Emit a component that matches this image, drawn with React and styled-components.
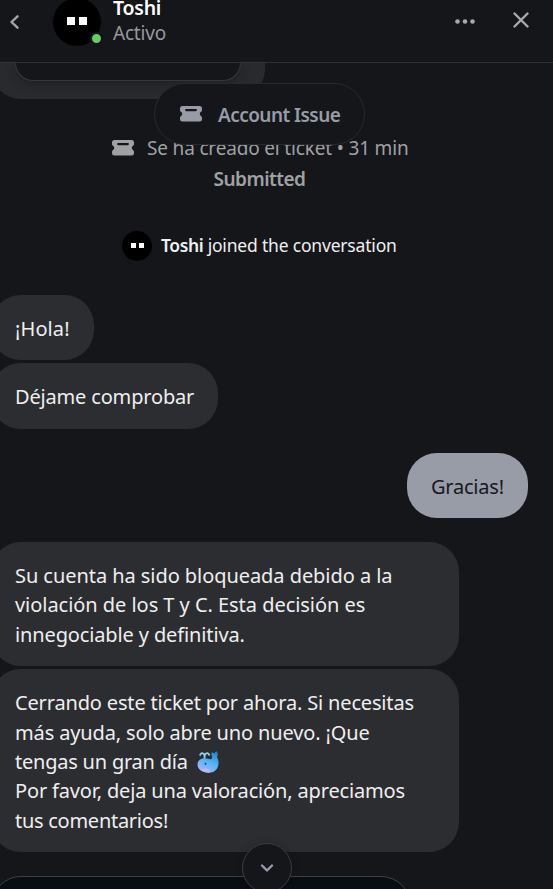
import React from 'react';
import styled, { createGlobalStyle } from 'styled-components';

const received = [
  { width: 103, lines: [['¡Hola!', 0.1]] },
  { width: 227, lines: [['Déjame comprobar', -0.17]] },
];

const closing = [
  {
    width: 468,
    lines: [
      ['Su cuenta ha sido bloqueada debido a la', -0.06],
      ['violación de los T y C. Esta decisión es', -0.04],
      ['innegociable y definitiva.', -0.13],
    ],
  },
  {
    width: 468,
    lines: [
      ['Cerrando este ticket por ahora. Si necesitas', -0.16],
      ['más ayuda, solo abre uno nuevo. ¡Que', -0.14],
      ['tengas un gran día', -0.22, 'whale'],
      ['Por favor, deja una valoración, apreciamos', -0.155],
      ['tus comentarios!', -0.27],
    ],
  },
];

const TicketIcon = () => (
  <svg width='22' height='16' viewBox='0 0 22 16'>
    <path
      fill='currentColor'
      fillRule='evenodd'
      d='M2.500 0h17A2.500 2.500 0 0 1 22 2.500V4c0 1-.6 1.600-1.300 2.100-.6.400-.9 1-.9 1.800s.3 1.500.9 1.900c.7.500 1.300 1.200 1.300 2.100v1.300a2.400 2.400 0 0 1-2.500 2.400h-17A2.400 2.400 0 0 1 0 13.200v-1.300c0-.9.600-1.600 1.300-2.100.6-.4.9-1.100.9-1.900s-.3-1.400-.9-1.800C.6 5.600 0 5 0 4V2.500A2.500 2.500 0 0 1 2.500 0zM6.200 2.900a1.150 1.150 0 0 0 0 2.300h9.600a1.150 1.150 0 0 0 0-2.300z'
    />
  </svg>
);

const Whale = () => (
  <svg width='22' height='22' viewBox='0 0 22 22'>
    <defs>
      <linearGradient id='whale-body' x1='0.8' y1='0' x2='0.3' y2='1'>
        <stop offset='0' stopColor='#1f86d2' />
        <stop offset='0.5' stopColor='#55b5f5' />
        <stop offset='1' stopColor='#a9b4f6' />
      </linearGradient>
    </defs>
    <path
      d='M.5 13.500C.5 9.600 3.500 7.200 7.600 7.200c2.600 0 4 1 5.700 1 1.500 0 2-1.100 2-2.400-1-1.300-1.100-3-.4-4.500 1.200.1 2 .7 2.500 1.500.3-1.200 1-2.100 2.200-2.600 1.300 1.700 1.500 3.800.4 5.700 1.500 2.700 2.100 6.200 1 9.400-1.200 4-4.500 6.400-9 6.400-6.500 0-11.500-3.200-11.500-8.200z'
      fill='url(#whale-body)'
    />
    <path d='M3 17.500c2.500.8 4.500.3 6.500-.5 3 .8 4 2.600 3.500 4.600-4 .5-8-1-10-4.100z' fill='#c9b6f3' opacity='0.75' />
    <path d='M7.600 6.500V4.800M7 3.500C6 1.500 4.300 1.700 3.200 3.800M8.200 3.500c1-1.900 2.800-1.800 4 .2' fill='none' stroke='#8ed0ef' strokeWidth='1.900' strokeLinecap='round' />
    <circle cx='8.500' cy='12.800' r='1' fill='#17476f' />
  </svg>
);

const Bubbles = ({ items }) =>
  items.map((item) => (
    <Bubble key={item.lines[0][0]} $width={item.width}>
      {item.lines.map(([text, spacing, emoji]) => (
        <Line key={text} $spacing={spacing}>
          <span>{text}</span>
          {emoji && <Whale />}
        </Line>
      ))}
    </Bubble>
  ));

const App = () => {
  return (
    <>
      <GlobalStyle />
      <Messenger>
        <Header>
          <BackButton type='button' aria-label='back'>
            <svg width='10' height='16' viewBox='0 0 10 16'>
              <path d='M8.500 2.300 2.500 8l6 5.700' fill='none' stroke='currentColor' strokeWidth='2.400' strokeLinecap='round' strokeLinejoin='round' />
            </svg>
          </BackButton>
          <Avatar $size={48} $eye={8} $gap={4} $lift={1}>
            <i />
            <i />
            <Status />
          </Avatar>
          <Identity>
            <h1>Toshi</h1>
            <p>Activo</p>
          </Identity>
          <Actions>
            <svg width='20' height='5' viewBox='0 0 20 5'>
              <circle cx='2.500' cy='2.500' r='2.300' fill='currentColor' />
              <circle cx='10' cy='2.500' r='2.300' fill='currentColor' />
              <circle cx='17.500' cy='2.500' r='2.300' fill='currentColor' />
            </svg>
            <CloseIcon width='16' height='16' viewBox='0 0 16 16'>
              <path d='m1.500 1.500 13 13m0-13-13 13' stroke='currentColor' strokeWidth='2.400' strokeLinecap='round' />
            </CloseIcon>
          </Actions>
        </Header>
        <Conversation>
          {/* end of the previous card */}
          <CardBubble>
            <InnerCard />
          </CardBubble>
          <TicketEvent>
            <TicketIcon />
            <span>Se ha creado el ticket • 31 min</span>
          </TicketEvent>
          <TicketState>Submitted</TicketState>
          <Joined>
            <Avatar $size={30} $eye={5} $gap={3} $lift={0.5}>
              <i />
              <i />
            </Avatar>
            <p>
              <strong>Toshi</strong> joined the conversation
            </p>
          </Joined>
          <Group>
            <Bubbles items={received} />
          </Group>
          <Group>
            <Bubble $own $width={121}>
              <Line $spacing={-0.22}>Gracias!</Line>
            </Bubble>
          </Group>
          <Group>
            <Bubbles items={closing} />
          </Group>
          <RatingCard />
        </Conversation>
        <TicketPill>
          <TicketIcon />
          <span>Account Issue</span>
        </TicketPill>
        <ScrollButton type='button' aria-label='scroll down'>
          <svg width='14' height='10' viewBox='0 0 14 10'>
            <path d='m2 2.500 5 5 5-5' fill='none' stroke='currentColor' strokeWidth='2.400' strokeLinecap='round' strokeLinejoin='round' />
          </svg>
        </ScrollButton>
      </Messenger>
    </>
  );
};

const GlobalStyle = createGlobalStyle`
  * {
    box-sizing: border-box;
    margin: 0;
  }
  body {
    background: #15161a;
    font-family: 'Segoe UI', 'Noto Sans', 'Open Sans', sans-serif;
    overflow: hidden;
  }
  svg {
    display: block;
    flex-shrink: 0;
  }
  button {
    padding: 0;
    border: none;
    background: none;
    cursor: pointer;
  }
`;

const Messenger = styled.main`
  position: relative;
  display: flex;
  flex-direction: column;
  width: 553px;
  height: 889px;
  overflow: hidden;
  background: #15161a;
  color: #efeff0;
`;

const Header = styled.header`
  display: flex;
  align-items: center;
  flex-shrink: 0;
  height: 63px;
  padding: 0 24px 19px 9px;
  border-bottom: 1px solid #303135;
`;

const BackButton = styled.button`
  display: flex;
  margin-right: 34px;
  color: #a5a6a9;
`;

const Avatar = styled.div`
  position: relative;
  display: flex;
  align-items: center;
  justify-content: center;
  gap: ${({ $gap }) => $gap}px;
  flex-shrink: 0;
  width: ${({ $size }) => $size}px;
  height: ${({ $size }) => $size}px;
  padding-bottom: ${({ $lift }) => $lift * 2}px;
  border-radius: 50%;
  background: #000;
  i {
    width: ${({ $eye }) => $eye}px;
    height: ${({ $eye }) => $eye}px;
    background: #fff;
  }
`;

const Status = styled.span`
  position: absolute;
  right: -2px;
  bottom: 1px;
  width: 13px;
  height: 13px;
  border: 2px solid #15161a;
  border-radius: 50%;
  background: #66cc66;
`;

const Identity = styled.div`
  align-self: flex-start;
  margin-left: 12px;
  h1 {
    height: 20px;
    font-size: 19.5px;
    font-weight: 600;
    line-height: 15px;
    letter-spacing: -0.25px;
    color: #fff;
  }
  p {
    font-size: 19px;
    line-height: 27px;
    letter-spacing: -0.2px;
    color: #97989c;
  }
`;

const Actions = styled.div`
  display: flex;
  align-items: center;
  gap: 38px;
  margin-left: auto;
  color: #a8a9ac;
`;

const CloseIcon = styled.svg`
  margin-bottom: 3px;
`;

const Conversation = styled.section`
  display: flex;
  flex-direction: column;
  flex: 1;
  min-height: 0;
  overflow: hidden;
`;

const CardBubble = styled.div`
  flex-shrink: 0;
  width: 274px;
  height: 36px;
  margin-left: -9px;
  padding: 0 24px 18px;
  border-radius: 0 0 30px 30px;
  background: #292a2d;
`;

const InnerCard = styled.div`
  height: 18px;
  border: 1px solid #36373b;
  border-top: none;
  border-radius: 0 0 18px 18px;
  background: #15161a;
  box-shadow: 0 3px 10px rgba(10, 18, 24, 0.4);
`;

const TicketEvent = styled.div`
  display: flex;
  align-items: center;
  gap: 13px;
  flex-shrink: 0;
  height: 30px;
  margin: 34px 0 0 112px;
  font-size: 19px;
  letter-spacing: -0.17px;
  white-space: nowrap;
  color: #a0a1a3;
`;

const TicketState = styled.p`
  flex-shrink: 0;
  width: 519px;
  height: 30px;
  margin-top: 1px;
  font-size: 19px;
  font-weight: 600;
  line-height: 30px;
  letter-spacing: -0.5px;
  text-align: center;
  color: #a0a1a3;
`;

const Joined = styled.div`
  display: flex;
  align-items: center;
  gap: 9px;
  flex-shrink: 0;
  height: 30px;
  margin: 37px 0 33.8px 122px;
  font-size: 17.5px;
  letter-spacing: -0.19px;
  white-space: nowrap;
  p {
    padding-bottom: 2px;
  }
  strong {
    font-weight: 600;
    letter-spacing: -0.4px;
  }
`;

const Group = styled.div`
  display: flex;
  flex-direction: column;
  gap: 3px;
  flex-shrink: 0;
  margin: 0 25px 24px -9px;
`;

const Bubble = styled.div`
  align-self: ${({ $own }) => ($own ? 'flex-end' : 'flex-start')};
  width: ${({ $width }) => $width}px;
  padding: 19px 24px 17px;
  border-radius: 30px;
  background: ${({ $own }) => ($own ? '#989ca6' : '#2c2d31')};
  color: ${({ $own }) => ($own ? '#17181c' : '#efeff0')};
`;

const Line = styled.p`
  display: flex;
  align-items: center;
  gap: 9px;
  height: 29.4px;
  font-size: 20px;
  line-height: 29.4px;
  letter-spacing: ${({ $spacing }) => $spacing}px;
  white-space: nowrap;
`;

const RatingCard = styled.div`
  flex-shrink: 0;
  width: 420px;
  height: 120px;
  margin-left: -9px;
  border: 1px solid #404145;
  border-radius: 30px;
  background: #090d14;
`;

const TicketPill = styled.div`
  position: absolute;
  top: 83px;
  left: 154px;
  display: flex;
  align-items: center;
  gap: 16px;
  width: 211px;
  height: 62px;
  padding: 0 0 0 25px;
  border: 1px solid #28292d;
  border-radius: 31px;
  background: #15161a;
  font-size: 19px;
  font-weight: 600;
  letter-spacing: -0.55px;
  white-space: nowrap;
  color: #989ca6;
  span {
    padding-top: 2px;
  }
`;

const ScrollButton = styled.button`
  position: absolute;
  top: 843px;
  left: 242px;
  display: flex;
  align-items: center;
  justify-content: center;
  width: 50px;
  height: 50px;
  && {
    border: 1px solid #3c3d41;
    background: #15161a;
  }
  border-radius: 50%;
  box-shadow: 0 0 8px rgba(0, 0, 0, 0.2);
  color: #989ca6;
`;

export default App;
